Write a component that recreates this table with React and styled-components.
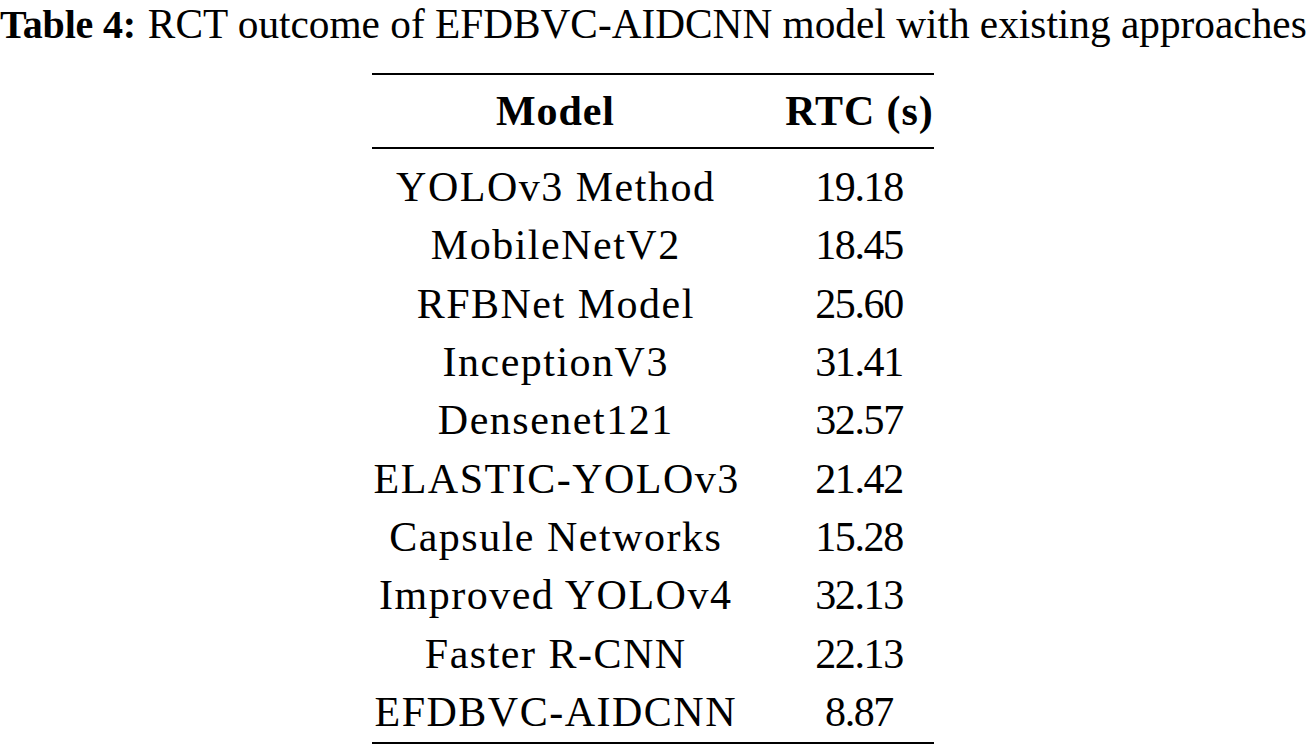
import React from "react";
import styled, { createGlobalStyle } from "styled-components";

const Global = createGlobalStyle`
  html, body { margin: 0; padding: 0; background: #ffffff; }
  body { font-family: "Liberation Serif", "Times New Roman", serif; color: #000; }
`;

const Page = styled.div`
  width: 1306px;
  height: 748px;
  overflow: hidden;
  display: flex;
  flex-direction: column;
  align-items: stretch;
`;

const Caption = styled.div`
  font-size: 41.3px;
  line-height: 44px;
  height: 46px;
  white-space: nowrap;
  padding-left: 0;
  padding-top: 2px;
  box-sizing: border-box;
`;

const CaptionLabel = styled.b`
  font-size: 40px;
  font-weight: 700;
  margin-right: 12px;
  letter-spacing: -0.2px;
`;

const Table = styled.div`
  align-self: center;
  width: 562px;
  margin-top: 27px;
  border-top: 2px solid #000;
  border-bottom: 2px solid #000;
`;

const Row = styled.div`
  display: grid;
  grid-template-columns: 366px 150px;
  column-gap: 46px;
  align-items: center;
  height: ${(p) => p.$h}px;
  font-size: 42px;
  font-weight: ${(p) => (p.$head ? 700 : 400)};
`;

const Head = styled.div`
  border-bottom: 2px solid #000;
`;

const Body = styled.div`
  padding-top: 9px;
  padding-bottom: 1px;
`;

const Cell = styled.div`
  text-align: center;
  white-space: nowrap;
  letter-spacing: ${(p) => p.$ls}px;
  padding-left: ${(p) => p.$ls}px;
`;

const rows = [
  ["YOLOv3 Method", "19.18"],
  ["MobileNetV2", "18.45"],
  ["RFBNet Model", "25.60"],
  ["InceptionV3", "31.41"],
  ["Densenet121", "32.57"],
  ["ELASTIC-YOLOv3", "21.42"],
  ["Capsule Networks", "15.28"],
  ["Improved YOLOv4", "32.13"],
  ["Faster R-CNN", "22.13"],
  ["EFDBVC-AIDCNN", "8.87"],
];

export default function App() {
  return (
    <Page>
      <Global />
      <Caption>
        <CaptionLabel>Table 4:</CaptionLabel>
        RCT outcome of EFDBVC-AIDCNN model with existing approaches
      </Caption>
      <Table>
        <Head>
          <Row $head $h={72}>
            <Cell $ls={0.9}>Model</Cell>
            <Cell $ls={0.9}>RTC (s)</Cell>
          </Row>
        </Head>
        <Body>
          {rows.map(([m, v]) => (
            <Row key={m} $h={58.3}>
              <Cell $ls={1.5}>{m}</Cell>
              <Cell $ls={-1.4}>{v}</Cell>
            </Row>
          ))}
        </Body>
      </Table>
    </Page>
  );
}
